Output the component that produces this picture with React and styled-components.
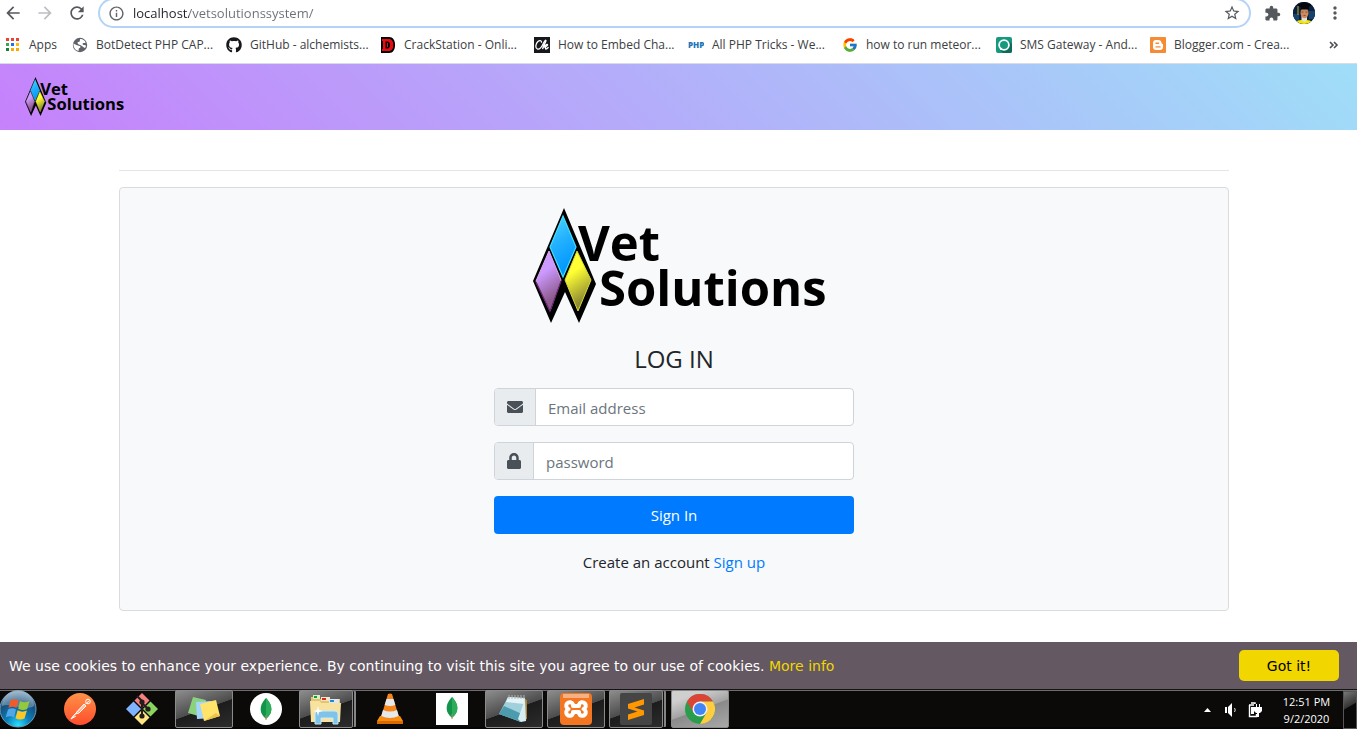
import React from "react";
import styled, { createGlobalStyle, css } from "styled-components";
import {
  MdArrowBack,
  MdArrowForward,
  MdRefresh,
  MdInfoOutline,
  MdStarBorder,
  MdExtension,
  MdMoreVert,
} from "react-icons/md";
import { FaGithub, FaEnvelope, FaLock } from "react-icons/fa";
import { FcGoogle } from "react-icons/fc";

const ui = `"Open Sans", "Noto Sans", sans-serif`;
const cookieFont = `"DejaVu Sans", Verdana, sans-serif`;

const GlobalStyle = createGlobalStyle`
  *, *::before, *::after { box-sizing: border-box; }
  body { margin: 0; background: #fff; font-family: ${ui}; color: #212529; }
  button, input { font-family: inherit; }
  a { text-decoration: none; }
`;

const Screen = styled.div`
  display: flex;
  flex-direction: column;
  min-height: 100vh;
  padding: 0 2px 3px 0;
`;

/* Browser chrome */

const Toolbar = styled.div`
  display: flex;
  align-items: center;
  height: 26px;
  padding-right: 12px;
`;

const ToolButton = styled.button`
  display: grid;
  place-items: center;
  flex: none;
  width: ${(p) => p.$width || 32}px;
  height: 24px;
  padding: 0;
  border: 0;
  background: none;
  color: ${(p) => (p.$dim ? "#bdbfc2" : "#55585d")};
`;

const NavButtons = styled.nav`
  display: flex;
  width: 98px;
  flex: none;
`;

const AddressBar = styled.div`
  display: flex;
  align-items: center;
  flex: 1;
  height: 30px;
  padding: 0 6px 0 8px;
  border: 2px solid #b3d3f7;
  border-radius: 15px;
  color: #5f6368;
  background: #fff;
`;

const AddressInput = styled.input`
  flex: 1;
  min-width: 0;
  height: 24px;
  margin-left: 8px;
  padding: 0;
  border: 0;
  outline: 0;
  font-size: 13px;
  color: transparent;
  background: linear-gradient(90deg, #202124 56px, #6b6f74 56px) text;
  -webkit-background-clip: text;
`;

const Avatar = styled.button`
  width: 22px;
  height: 22px;
  margin-right: 10px;
  padding: 0;
  border: 0;
  border-radius: 50%;
  overflow: hidden;
  background: #0d1c33;
  flex: none;
  svg { display: block; }
`;

const BookmarkBar = styled.nav`
  display: flex;
  align-items: center;
  height: 38px;
  padding: 0 18px 0 5px;
  border-bottom: 1px solid #dadce0;
`;

const Bookmark = styled.a`
  display: flex;
  align-items: center;
  gap: 8px;
  flex: none;
  width: ${(p) => p.$width || 154}px;
  font-size: 12px;
  line-height: 16px;
  color: #3c4043;
  white-space: nowrap;
  svg { flex: none; }
`;

const Overflow = styled.button`
  display: grid;
  place-items: center;
  margin-left: auto;
  padding: 0;
  border: 0;
  background: none;
  color: #4a4d51;
`;

/* Site */

const SiteHeader = styled.header`
  display: flex;
  align-items: center;
  height: 66px;
  padding: 0 25px 2px;
  background: linear-gradient(45deg, #c681fb, #9fdef8);
`;

const Main = styled.main`
  flex: 1;
  padding: 40px 24px 31px 15px;
`;

const Container = styled.div`
  max-width: 1110px;
  margin: 0 auto;
`;

const Rule = styled.hr`
  margin: 0 0 16px;
  border: 0;
  border-top: 1px solid #e5e5e5;
`;

const Card = styled.section`
  display: flex;
  flex-direction: column;
  align-items: center;
  padding: 20px 20px 36px;
  border: 1px solid #d9dbdd;
  border-radius: 4px;
  background: #f8f9fa;
`;

const LogoLink = styled.a`
  display: block;
  line-height: 0;
`;

const LogoSvg = styled.svg`
  display: block;
  overflow: visible;
`;

const BigLogo = styled.div`
  padding-left: 11px;
`;

const Title = styled.h1`
  margin: 22px 0 15px;
  font-size: 24px;
  line-height: 28px;
  font-weight: 500;
`;

const Form = styled.form`
  display: flex;
  flex-direction: column;
  gap: 16px;
  width: 100%;
  max-width: 360px;
`;

const InputGroup = styled.div`
  display: flex;
  height: 38px;
  border: 1px solid #ced4da;
  border-radius: 4px;
  background: #fff;
  overflow: hidden;
`;

const InputIcon = styled.label`
  display: flex;
  align-items: center;
  padding: 0 12px;
  border-right: 1px solid #ced4da;
  background: #e9ecef;
  color: #495057;
  svg { display: block; width: ${(p) => p.$iconWidth}px; height: 16px; }
`;

const TextInput = styled.input`
  flex: 1;
  min-width: 0;
  padding: 2px 12px 0;
  border: 0;
  outline: 0;
  background: none;
  font-size: 15px;
  color: #495057;
  &::placeholder { color: #6c757d; opacity: 1; }
`;

const SignIn = styled.button`
  height: 38px;
  padding: 0;
  border: 0;
  border-radius: 4px;
  background: #007bff;
  color: #fff;
  font-size: 15px;
`;

const Note = styled.p`
  margin: 0;
  font-size: 15px;
  line-height: 24px;
  text-align: center;
  a { color: #007bff; }
`;

const CookieBar = styled.aside`
  display: flex;
  align-items: center;
  justify-content: space-between;
  min-height: 47px;
  padding: 8px 18px 8px 9px;
  background: #645862;
  color: #fff;
  font-family: ${cookieFont};
  font-size: 14px;
  line-height: 20px;
  p { margin: 0; }
  a { color: #f1d600; }
`;

const GotIt = styled.button`
  flex: none;
  width: 100px;
  height: 31px;
  padding: 0;
  border: 0;
  border-radius: 5px;
  background: #f1d600;
  color: #000;
  font-size: 14px;
`;

/* Taskbar */

const Taskbar = styled.footer`
  display: flex;
  height: 40px;
  background: linear-gradient(#141414 1px, #6d6d6d 1px 2px, #0b0a09 2px 38px, #050505 38px);
`;

const StartButton = styled.button`
  width: 51px;
  padding: 0;
  border: 0;
  background: none;
  text-align: left;
  flex: none;
  svg { display: block; }
`;

const TaskList = styled.div`
  display: flex;
  gap: 4px;
  padding-top: 1px;
`;

const openTask = css`
  border-color: #8b8b8b;
  background: ${(p) =>
    p.$state === "active"
      ? "linear-gradient(160deg, #cfcfcf 0 20%, #a3a3a3 50%, #8a8a8a 52%, #a9a9a9)"
      : "linear-gradient(160deg, #8d8d8d 0, #4c4c4c 50%, #1c1c1c 51%, #2c2c2c)"};
`;

const Task = styled.button`
  display: grid;
  place-items: center;
  flex: none;
  width: ${(p) => (p.$stacked ? 54 : 58)}px;
  height: 38px;
  margin-right: ${(p) => (p.$stacked ? 4 : 0)}px;
  padding: 0;
  border: 1px solid transparent;
  border-radius: 2px;
  background: none;
  box-shadow: ${(p) =>
    p.$stacked ? "2px 0 0 -1px #111, 4px 0 0 -1px #858585" : "none"};
  ${(p) => p.$state && openTask}
`;

const Tray = styled.div`
  display: flex;
  align-items: center;
  margin-left: auto;
  padding-top: 2px;
`;

const TrayIcons = styled.div`
  display: flex;
  align-items: center;
  gap: 12px;
  margin-right: 20px;
`;

const Clock = styled.time`
  width: 49px;
  margin-right: 12px;
  color: #fff;
  font-size: 11px;
  line-height: 17px;
  text-align: center;
  white-space: nowrap;
`;

const ShowDesktop = styled.button`
  width: 14px;
  height: 38px;
  padding: 0;
  border: 1px solid #555;
  background: linear-gradient(150deg, #777, #333 40%, #080808 42%);
`;

/* Drawings */

function Logo({ id, width, height }) {
  return (
    <LogoSvg width={width} height={height} viewBox="0 0 293 115" role="img" aria-label="Vet Solutions">
      <defs>
        <linearGradient id={`${id}b`} x1="0" y1="0" x2=".3" y2="1">
          <stop offset=".1" stopColor="#48d0ff" />
          <stop offset=".5" stopColor="#22b0ff" />
          <stop offset="1" stopColor="#0096ff" />
        </linearGradient>
        <linearGradient id={`${id}p`} x1=".2" y1="0" x2=".5" y2="1">
          <stop offset=".35" stopColor="#cc99ff" />
          <stop offset=".85" stopColor="#8d5a8d" />
        </linearGradient>
        <linearGradient id={`${id}y`} x1=".2" y1="0" x2=".5" y2="1">
          <stop offset=".35" stopColor="#ffff33" />
          <stop offset=".9" stopColor="#8d8a33" />
        </linearGradient>
      </defs>
      <path d="M31 0 63 76 46 115 32 84 18 115 0 73Z" fill="#000" />
      <path d="M30 8 43 39 30 69 17 39Z" fill={`url(#${id}b)`} stroke="#3fe0ff" strokeWidth="1.2" />
      <path d="M16 43 28 72 17 103 3 73Z" fill={`url(#${id}p)`} stroke="#dda8f0" strokeWidth="1" />
      <path d="M3 74 17 103 28 73" fill="none" stroke="#6a2a70" strokeWidth="1.4" />
      <path d="M44 43 58 72 45 103 32 72Z" fill={`url(#${id}y)`} stroke="#d9d934" strokeWidth="1" />
      <g fontFamily="Open Sans, Noto Sans, sans-serif" fontWeight="700" fontSize="49" fill="#000">
        <text x="45" y="53">Vet</text>
        <text x="66" y="98">Solutions</text>
      </g>
    </LogoSvg>
  );
}

const AppsIcon = () => (
  <svg width="16" height="16" viewBox="0 0 16 16">
    {["#ea4335", "#ea4335", "#ea4335", "#34a853", "#1a73e8", "#fbbc04", "#188038", "#f9ab00", "#f9ab00"].map((c, i) => (
      <rect key={i} x={1 + (i % 3) * 5} y={1 + Math.floor(i / 3) * 5} width="3" height="3" fill={c} />
    ))}
  </svg>
);

const GlobeIcon = () => (
  <svg width="16" height="16" viewBox="0 0 16 16">
    <circle cx="8" cy="8" r="7.2" fill="#5f6368" />
    <path d="M1.5 6.5 5 8.2c1 .5 3 .2 3.4 1.4.3 1-.6 1.6-1.6 1.900L6.500 14C3 13.200 1.200 10 1.500 6.500ZM8 2.200c2-.4 4.600.8 5.700 3.400-1 .8-2.200.2-3 .8-.8.700.500 1.600 1.500 1.700l1.800.3c-.1 1-.4 1.900-1 2.700C11.500 10.500 10.500 9 8.800 8.300 7 7.500 5.500 7 5.500 5.800c0-1.100 1.700-.8 2.300-1.600Z" fill="#fff" />
  </svg>
);

const CrackIcon = () => (
  <svg width="16" height="16" viewBox="0 0 16 16">
    <path d="M1 0h8c4 0 6 3.500 6 8s-2 8-6 8H1Z" fill="#000" />
    <path d="M2 2h7c3 0 4.300 2.500 4.300 6S12 14 9 14H2v-2h1V4H2Z" fill="#e80c12" />
    <path d="M5.500 4.500h2.300c1.300 0 2.200 1.200 2.200 3.500s-.9 3.500-2.200 3.500H5.500Z" fill="#000" />
    <path d="M7.500 6v4" stroke="#e80c12" />
  </svg>
);

const ChIcon = () => (
  <svg width="16" height="16" viewBox="0 0 16 16">
    <path d="M0 0h16v16H0Z" fill="#17181c" />
    <path d="M7.500 5.200C7.500 3.300 5.500 3 3.700 4.700 1.500 7 1 11 3.300 12c1.800.7 4-1.500 5.500-4.500C10 5 11.500 2.500 12 3.500c.5 1.200-3 5-3.500 8.500.8-2 2-4 3-3.700 1 .300-.700 3.700.4 3.700.8 0 1.600-.700 2.300-1.500M11 10c1.500-.500 3-1.700 2.500-2.500-.600-.700-2 .8-2.500 2.500Z" fill="none" stroke="#fff" strokeWidth="1.300" strokeLinecap="round" />
  </svg>
);

const PhpIcon = () => (
  <svg width="16" height="16" viewBox="0 0 16 16">
    <text x="0" y="11" fontFamily="Open Sans, sans-serif" fontSize="8" fontWeight="800" fill="#1c75b8">PHP</text>
  </svg>
);

const SmsIcon = () => (
  <svg width="16" height="16" viewBox="0 0 16 16">
    <rect width="16" height="16" rx="2" fill="#159a80" />
    <path d="M4 13 13 4l3 3v7a2 2 0 0 1-2 2H7Z" fill="#0c6b59" />
    <circle cx="8" cy="8" r="4.900" fill="#159a80" stroke="#fff" strokeWidth="1.800" />
    <path d="m4 13 .5-3L7 12.500Z" fill="#fff" />
  </svg>
);

const BloggerIcon = () => (
  <svg width="16" height="16" viewBox="0 0 16 16">
    <rect width="16" height="16" rx="1" fill="#f68b33" />
    <path d="M6 3h2.500C10.500 3 11.500 4.500 11.500 6c0 1 1.500.3 1.500 1.700V10c0 2-1.200 3-3 3H6c-2 0-3-1.200-3-3V6c0-2 1.200-3 3-3Z" fill="#fff" />
    <path d="M6 6.200h2.500M6 9.900h4" stroke="#f68b33" strokeWidth="1.400" strokeLinecap="round" />
  </svg>
);

const AvatarPicture = () => (
  <svg width="22" height="22" viewBox="0 0 22 22">
    <rect width="22" height="22" fill="#0b2140" />
    <path d="M0 12h6v8H0ZM16 9h6v8h-6Z" fill="#17426e" />
    <path d="M2 22c1-4 5-4 9-4s8 0 9 4Z" fill="#f4e60a" />
    <path d="M8.500 14h5.500v4l-2.500 2-3-2Z" fill="#e7e3d8" />
    <ellipse cx="11.500" cy="11" rx="4" ry="5.200" fill="#cc8a60" />
    <path d="M8.500 10h2M12.500 10h2M10.500 13.500h2" stroke="#8a5233" />
    <path d="M4 3 11 0l8 2.500-3 2.500v2.500H7.500V5Z" fill="#05070c" />
    <path d="M5 4v9" stroke="#c8ad1c" />
  </svg>
);

const StartIcon = () => (
  <svg width="38" height="40" viewBox="0 0 38 40">
    <defs>
      <radialGradient id="orb" cx=".5" cy=".95" r=".95">
        <stop offset="0" stopColor="#2be0ff" />
        <stop offset=".35" stopColor="#0b7fba" />
        <stop offset=".7" stopColor="#174f7c" />
        <stop offset="1" stopColor="#7fa5bf" />
      </radialGradient>
    </defs>
    <circle cx="18" cy="20" r="18" fill="url(#orb)" stroke="#6f9bb8" />
    <path d="M2 17A16 16 0 0 1 34 17C24 23 12 13 2 17Z" fill="#fff" opacity=".28" />
    <path d="M10.500 11.500c3-2 5.500-1.500 8-.2L16.500 19c-2.500-1.400-5-1.600-8 0Z" fill="#ef5b2a" />
    <path d="M20 12c3 1.500 6 1.800 9.500 0l-2.300 8c-3 1.700-6 1.300-9-.2Z" fill="#94c83d" />
    <path d="M8 20.500c3-1.700 5.500-1.400 8 0L14 28.500c-2.500-1.500-5-1.800-8.300-.2Z" fill="#4fa7e8" />
    <path d="M17.600 21.300c3 1.600 6 1.900 9.300.2l-2.400 8c-3.200 1.700-6 1.300-9-.3Z" fill="#fbc926" />
  </svg>
);

const PostmanIcon = () => (
  <svg width="32" height="32" viewBox="0 0 32 32">
    <defs>
      <linearGradient id="pm" x2="0" y2="1"><stop stopColor="#ff9148" /><stop offset="1" stopColor="#ff4e2b" /></linearGradient>
    </defs>
    <circle cx="16" cy="16" r="16" fill="url(#pm)" />
    <path d="m12 19 8-8 2 2-8 7Z" fill="#fff" opacity=".55" />
    <path d="m7 26 5-6 8-9 2 2-7 7-4 1ZM7 26l5-3" fill="none" stroke="#fff" strokeWidth="1" />
    <circle cx="24" cy="8.500" r="2.300" fill="none" stroke="#fff" strokeWidth="1" />
    <path d="m23 9.500 2.500-1.500M21 11.500l1.500-1.500" stroke="#fff" />
  </svg>
);

const GitIcon = () => (
  <svg width="32" height="32" viewBox="0 0 32 32">
    <path d="m16 0 7.500 7.500-7.500 7.500-7.500-7.500Z" fill="#f48080" />
    <path d="m7.500 8.500 7.500 7.500-7.500 7.500L0 16Z" fill="#80b3ff" />
    <path d="m24.500 8.500L32 16l-7.500 7.500L17 16Z" fill="#8dd35f" />
    <path d="m16 17 7.500 7.500L16 32l-7.500-7.500Z" fill="#ffe680" />
    <path d="M11 3l5 5v15M16 10l6 6" fill="none" stroke="#241d1c" strokeWidth="2" />
    <circle cx="16" cy="9" r="2.600" fill="#241d1c" />
    <circle cx="16" cy="23" r="2.600" fill="#241d1c" />
    <circle cx="22" cy="16" r="2.600" fill="#241d1c" />
  </svg>
);

const NotesIcon = () => (
  <svg width="34" height="28" viewBox="0 0 34 28">
    <path d="m6 2 13 3-4 17-14-4Z" fill="#8bd17e" />
    <path d="m9 7 15-1 2 17-16 1Z" fill="#a3d5ff" />
    <path d="m13 9 16-4 4 16-16 5Z" fill="#ffe36a" />
    <path d="m17 26 16-5-4-3Z" fill="#e9c34c" />
  </svg>
);

const Leaf = ({ x = 16, y = 5 }) => (
  <g transform={`translate(${x} ${y})`}>
    <path d="M0 0c4.500 5 5.500 8.500 5.300 12C5 16 3 18 .4 20.500h-.8C-3 18-5 16-5.300 12-5.500 8.500-4.500 5 0 0Z" fill="#12944b" />
    <path d="M0 0c4.500 5 5.500 8.500 5.300 12C5 16 3 18 .4 20.500H0Z" fill="#2bad5a" />
    <path d="M0 17v5" stroke="#b08b5a" />
  </g>
);

const MongoRound = () => (
  <svg width="32" height="32" viewBox="0 0 32 32"><circle cx="16" cy="16" r="16" fill="#fff" /><Leaf /></svg>
);

const MongoSquare = () => (
  <svg width="32" height="32" viewBox="0 0 32 32"><path d="M0 0h32v32H0Z" fill="#fff" /><Leaf y={4} /></svg>
);

const FolderIcon = () => (
  <svg width="34" height="32" viewBox="0 0 34 32">
    <path d="M2 4h8l1 2h20v23H2Z" fill="#e7c46b" />
    <path d="M4 2h7v4H4Z" fill="#d9efc9" /><path d="M5 3h3v2H5Z" fill="#0aa52d" />
    <path d="M12 4h9v4h-9Z" fill="#f7e6c6" /><path d="M13 5h4v2h-4Z" fill="#d52b1e" />
    <path d="M20 6h10v4H20Z" fill="#dbe9f7" /><path d="M21 7h4v2h-4Z" fill="#1f8ad0" />
    <path d="M1 8h10l1 2h20l-1 19H2Z" fill="#f8e2a0" />
    <path d="M6 31V21q0-3 3-3h17q3 0 3 3v10h-5v-6H12v6Z" fill="#7fc3e8" stroke="#c7ebff" />
    <path d="m9 13 1 4 4 1-4 1-1 4-1-4-4-1 4-1Z" fill="#fff" />
  </svg>
);

const VlcIcon = () => (
  <svg width="28" height="32" viewBox="0 0 28 32">
    <path d="M4 23h20l3 5v3H1v-3Z" fill="#f78f0e" /><path d="M1 28h26v3H1Z" fill="#d96a00" />
    <path d="M12 1q2-1 4 0l7 23q-9 5-18 0Z" fill="#f6861a" />
    <path d="m10.500 6h7l1.800 6q-5.300 2-10.600 0ZM7 17q7 3 14 0l1.800 6q-9 4-17.600 0Z" fill="#e6e9ec" />
  </svg>
);

const NotepadIcon = () => (
  <svg width="34" height="30" viewBox="0 0 34 30">
    <path d="m26 4 4 2v19l-8 3Z" fill="#a8853f" />
    <path d="M11 3 28 4 24 28 2 20Z" fill="#9fd0dc" />
    <path d="M11 3 28 4 27 10 9 8Z" fill="#e3f3f6" />
    <path d="M2 20 7 12 25 20 24 28Z" fill="#4c9cae" />
    <path d="M12 1v4M15 1v4M18 1v4M21 1v4M24 1v4M27 1v4" stroke="#b5b5b5" />
    <path d="M28 5 29 27 24 28 21 25Z" fill="#d6edf2" />
  </svg>
);

const XamppIcon = () => (
  <svg width="32" height="32" viewBox="0 0 32 32">
    <rect width="32" height="32" rx="4" fill="#f37623" />
    <path d="M3 1h26v4H3Z" fill="#f7b07f" />
    <path d="M13 13v-1.500a3.500 3.500 0 1 0-4.500 4.500 3.500 3.500 0 1 0 4.500 4.500V19h6v1.500a3.500 3.500 0 1 0 4.500-4.500 3.500 3.500 0 1 0-4.500-4.500V13Z" fill="none" stroke="#fff" strokeWidth="4" strokeLinejoin="round" />
  </svg>
);

const SublimeIcon = () => (
  <svg width="32" height="32" viewBox="0 0 32 32">
    <rect width="32" height="32" rx="2" fill="#454545" />
    <path d="M8 11 24 6v5.500L14.500 14.500 24 17.500V22L8 27v-5.500l9.500-3L8 15.500Z" fill="#ff9800" />
  </svg>
);

const ChromeIcon = () => (
  <svg width="30" height="30" viewBox="0 0 30 30">
    <circle cx="15" cy="15" r="15" fill="#2a9d4c" />
    <path d="M2 7.500A15 15 0 0 1 28 7.500H15L8.500 18.700Z" fill="#db4437" />
    <path d="M28 7.500A15 15 0 0 1 15 30L21.500 18.700 15 7.500Z" fill="#ffcd40" />
    <circle cx="15" cy="15" r="7.500" fill="#f1f1f1" />
    <circle cx="15" cy="15" r="6" fill="#4285f4" />
  </svg>
);

const bookmarks = [
  ["BotDetect PHP CAP...", <GlobeIcon />],
  ["GitHub - alchemists...", <FaGithub size={16} color="#16181b" />],
  ["CrackStation - Onli...", <CrackIcon />],
  ["How to Embed Cha...", <ChIcon />],
  ["All PHP Tricks - We...", <PhpIcon />],
  ["how to run meteor...", <FcGoogle size={16} />],
  ["SMS Gateway - And...", <SmsIcon />],
  ["Blogger.com - Crea...", <BloggerIcon />],
];

const tasks = [
  { name: "Postman", icon: <PostmanIcon /> },
  { name: "Git", icon: <GitIcon /> },
  { name: "Sticky Notes", icon: <NotesIcon />, state: "open" },
  { name: "MongoDB Compass", icon: <MongoRound /> },
  { name: "Explorer", icon: <FolderIcon />, state: "open", stacked: true },
  { name: "VLC", icon: <VlcIcon /> },
  { name: "MongoDB", icon: <MongoSquare /> },
  { name: "Notepad", icon: <NotepadIcon />, state: "open" },
  { name: "XAMPP", icon: <XamppIcon />, state: "open" },
  { name: "Sublime Text", icon: <SublimeIcon />, state: "open", stacked: true },
  { name: "Chrome", icon: <ChromeIcon />, state: "active" },
];

export default function App() {
  return (
    <Screen>
      <GlobalStyle />
      <Toolbar>
        <NavButtons>
          <ToolButton $width={26} aria-label="Back"><MdArrowBack size={20} /></ToolButton>
          <ToolButton $width={38} $dim aria-label="Forward"><MdArrowForward size={20} /></ToolButton>
          <ToolButton $width={26} aria-label="Reload"><MdRefresh size={20} /></ToolButton>
        </NavButtons>
        <AddressBar>
          <MdInfoOutline size={17} />
          <AddressInput aria-label="Address" defaultValue="localhost/vetsolutionssystem/" />
          <ToolButton $width={22} aria-label="Bookmark this page"><MdStarBorder size={18} /></ToolButton>
        </AddressBar>
        <ToolButton $width={42} aria-label="Extensions"><MdExtension size={17} /></ToolButton>
        <Avatar aria-label="Profile"><AvatarPicture /></Avatar>
        <ToolButton $width={20} aria-label="Menu"><MdMoreVert size={20} /></ToolButton>
      </Toolbar>
      <BookmarkBar>
        <Bookmark href="#apps" $width={67}><AppsIcon />Apps</Bookmark>
        {bookmarks.map(([label, icon]) => (
          <Bookmark href="#bookmark" key={label}>{icon}{label}</Bookmark>
        ))}
        <Overflow aria-label="More bookmarks">
          <svg width="11" height="10" viewBox="0 0 11 10"><path d="m2 2 3 3-3 3M6 2l3 3-3 3" fill="none" stroke="currentColor" strokeWidth="1.600" /></svg>
        </Overflow>
      </BookmarkBar>

      <SiteHeader>
        <LogoLink href="#home"><Logo id="small" width={99} height={39} /></LogoLink>
      </SiteHeader>

      <Main>
        <Container>
          <Rule />
          <Card>
            <BigLogo><Logo id="large" width={293} height={115} /></BigLogo>
            <Title>LOG IN</Title>
            <Form onSubmit={(e) => e.preventDefault()}>
              <InputGroup>
                <InputIcon htmlFor="email" aria-label="Email address" $iconWidth={16}><FaEnvelope /></InputIcon>
                <TextInput id="email" type="email" placeholder="Email address" />
              </InputGroup>
              <InputGroup>
                <InputIcon htmlFor="password" aria-label="Password" $iconWidth={14}><FaLock /></InputIcon>
                <TextInput id="password" type="password" placeholder="password" />
              </InputGroup>
              <SignIn type="submit">Sign In</SignIn>
              <Note>Create an account <a href="#signup">Sign up</a></Note>
            </Form>
          </Card>
        </Container>
      </Main>

      <CookieBar>
        <p>We use cookies to enhance your experience. By continuing to visit this site you agree to our use of cookies. <a href="#info">More info</a></p>
        <GotIt>Got it!</GotIt>
      </CookieBar>

      <Taskbar>
        <StartButton aria-label="Start"><StartIcon /></StartButton>
        <TaskList>
          {tasks.map((t) => (
            <Task key={t.name} aria-label={t.name} $state={t.state} $stacked={t.stacked}>{t.icon}</Task>
          ))}
        </TaskList>
        <Tray>
          <TrayIcons>
            <svg width="7" height="4" viewBox="0 0 7 4"><path d="M0 4 3.500 0 7 4Z" fill="#fff" /></svg>
            <svg width="13" height="14" viewBox="0 0 13 14">
              <path d="M2 4h2v6H2ZM5 4l4-4v14l-4-4Z" fill="#fff" />
              <path d="M11.500 5q1.500 2 0 4" fill="none" stroke="#ddd" />
            </svg>
            <svg width="14" height="16" viewBox="0 0 14 16">
              <path d="M3 1h4v1M1 3h5M1.500 3v11.500h7V12" fill="none" stroke="#fff" strokeWidth="1.400" />
              <path d="M3 5h3v7H3Z" fill="#fff" />
              <path d="M6 5h8v4l-2 2h-4L6 9ZM8 2h1v3H8ZM11 2h1v3h-1ZM9 11h2v4H9Z" fill="#fff" />
            </svg>
          </TrayIcons>
          <Clock>12:51 PM<br />9/2/2020</Clock>
          <ShowDesktop aria-label="Show desktop" />
        </Tray>
      </Taskbar>
    </Screen>
  );
}
